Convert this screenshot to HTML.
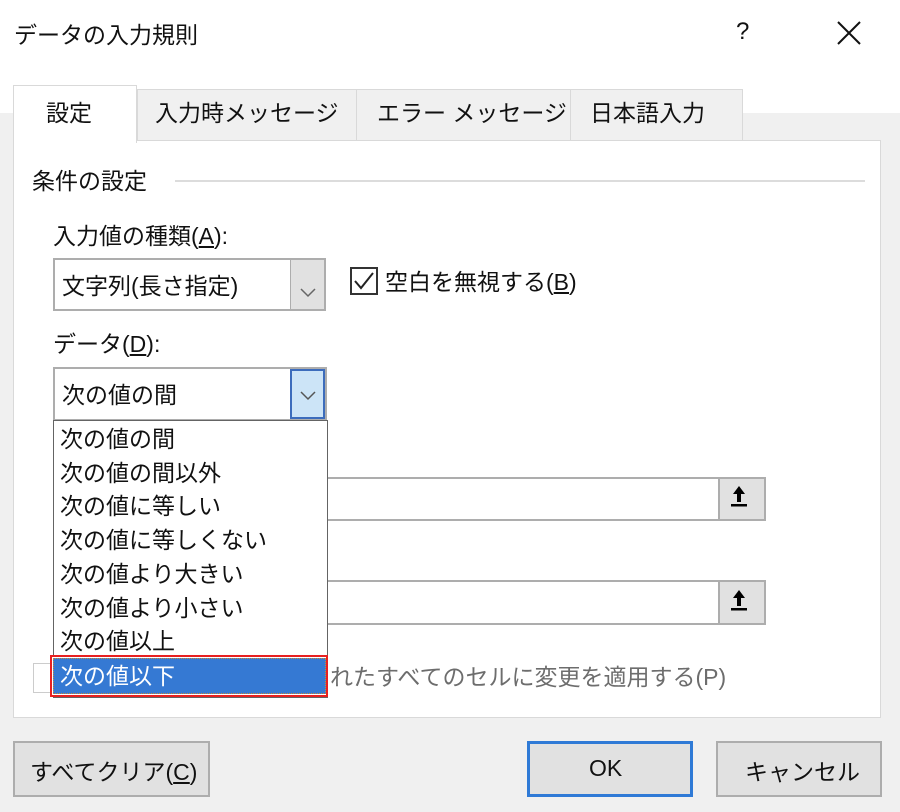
<!DOCTYPE html>
<html><head><meta charset="utf-8"><style>
*{box-sizing:border-box;margin:0;padding:0}
body{width:900px;height:812px;background:#f0f0f0;font-family:"Liberation Sans","Noto Sans CJK JP",sans-serif;color:#111;position:relative;overflow:hidden;font-size:23px}
.a{position:absolute;white-space:nowrap}
</style></head><body>
<div class="a" style="left:0;top:0;width:900px;height:113px;background:#fff"></div>
<div class="a" style="left:14px;top:16px;font-size:23px">データの入力規則</div>
<div class="a" style="left:736px;top:18px;font-size:24px">?</div>
<svg class="a" style="left:836px;top:20px" width="26" height="26"><path d="M2 2L24 24M24 2L2 24" stroke="#111" stroke-width="2"/></svg>
<!-- tabs -->
<div class="a" style="left:137px;top:89px;width:606px;height:52px;background:#f0f0f0;border:1px solid #d9d9d9;border-bottom:none"></div>
<div class="a" style="left:356px;top:89px;width:1px;height:52px;background:#d9d9d9"></div>
<div class="a" style="left:570px;top:89px;width:1px;height:52px;background:#d9d9d9"></div>
<div class="a" style="left:13px;top:140px;width:868px;height:578px;background:#fff;border:1px solid #d9d9d9"></div>
<div class="a" style="left:13px;top:85px;width:124px;height:58px;background:#fff;border:1px solid #d9d9d9;border-bottom:none"></div>
<div class="a" style="left:46px;top:94px">設定</div>
<div class="a" style="left:155px;top:94px">入力時メッセージ</div>
<div class="a" style="left:377px;top:94px">エラー メッセージ</div>
<div class="a" style="left:590px;top:94px">日本語入力</div>
<div class="a" style="left:32px;top:162px">条件の設定</div>
<div class="a" style="left:175px;top:180px;width:690px;height:2px;background:#dcdcdc"></div>
<div class="a" style="left:53px;top:217px">入力値の種類(<u>A</u>):</div>
<div class="a" style="left:53px;top:258px;width:273px;height:53px;background:#fff;border:2px solid #adadad"></div>
<div class="a" style="left:290px;top:260px;width:34px;height:49px;background:#e1e1e1;border-left:1px solid #adadad"></div>
<svg class="a" style="left:300px;top:288px" width="16" height="10"><path d="M1 1L8 8L15 1" stroke="#666" fill="none" stroke-width="1.5"/></svg>
<div class="a" style="left:62px;top:267px">文字列(長さ指定)</div>
<div class="a" style="left:350px;top:267px;width:28px;height:28px;border:2px solid #333;background:#fff"></div>
<svg class="a" style="left:352px;top:270px" width="24" height="22"><path d="M3 11L9 18L21 3" stroke="#222" fill="none" stroke-width="2"/></svg>
<div class="a" style="left:385px;top:263px">空白を無視する(<u>B</u>)</div>
<div class="a" style="left:53px;top:325px">データ(<u>D</u>):</div>
<div class="a" style="left:53px;top:367px;width:274px;height:54px;background:#fff;border:2px solid #adadad"></div>
<div class="a" style="left:290px;top:369px;width:35px;height:50px;background:#cce4f7;border:2px solid #3c6cbc"></div>
<svg class="a" style="left:300px;top:391px" width="16" height="10"><path d="M1 1L8 8L15 1" stroke="#555" fill="none" stroke-width="1.5"/></svg>
<div class="a" style="left:62px;top:376px">次の値の間</div>
<!-- inputs -->
<div class="a" style="left:320px;top:477px;width:446px;height:44px;background:#fff;border:2px solid #adadad"></div>
<div class="a" style="left:718px;top:479px;width:46px;height:40px;background:#e1e1e1;border-left:2px solid #adadad"></div>
<svg class="a" style="left:728px;top:484px" width="22" height="26"><path d="M11 2L5 10H9V18H13V10H17Z" fill="#000"/><rect x="3" y="20" width="16" height="2.5" fill="#000"/></svg>
<div class="a" style="left:320px;top:580px;width:446px;height:45px;background:#fff;border:2px solid #adadad"></div>
<div class="a" style="left:718px;top:582px;width:46px;height:41px;background:#e1e1e1;border-left:2px solid #adadad"></div>
<svg class="a" style="left:728px;top:588px" width="22" height="26"><path d="M11 2L5 10H9V18H13V10H17Z" fill="#000"/><rect x="3" y="20" width="16" height="2.5" fill="#000"/></svg>
<div class="a" style="left:33px;top:663px;width:20px;height:30px;border:1px solid #ccc;background:#fff"></div>
<div class="a" style="left:330px;top:658px;color:#6d6d6d">れたすべてのセルに変更を適用する(P)</div>
<!-- list -->
<div class="a" style="left:53px;top:420px;width:275px;height:278px;background:#fff;border:1px solid #646464;line-height:33.7px;padding-left:6px;padding-top:2px">
次の値の間<br>次の値の間以外<br>次の値に等しい<br>次の値に等しくない<br>次の値より大きい<br>次の値より小さい<br>次の値以上</div>
<div class="a" style="left:50px;top:655px;width:278px;height:42px;border:2px solid #e82020;background:#fff"></div>
<div class="a" style="left:53px;top:658px;width:273px;height:36px;background:#3579d3;border:1px dotted #c98a3a;color:#fff;padding-left:6px;line-height:34px">次の値以下</div>
<!-- buttons -->
<div class="a" style="left:13px;top:741px;width:197px;height:56px;background:#e1e1e1;border:2px solid #adadad"></div>
<div class="a" style="left:30px;top:753px">すべてクリア(<u>C</u>)</div>
<div class="a" style="left:527px;top:741px;width:166px;height:56px;background:#e1e1e1;border:3px solid #2f7ad6"></div>
<div class="a" style="left:589px;top:755px">OK</div>
<div class="a" style="left:716px;top:741px;width:166px;height:56px;background:#e1e1e1;border:2px solid #adadad"></div>
<div class="a" style="left:745px;top:753px">キャンセル</div>
</body></html>
